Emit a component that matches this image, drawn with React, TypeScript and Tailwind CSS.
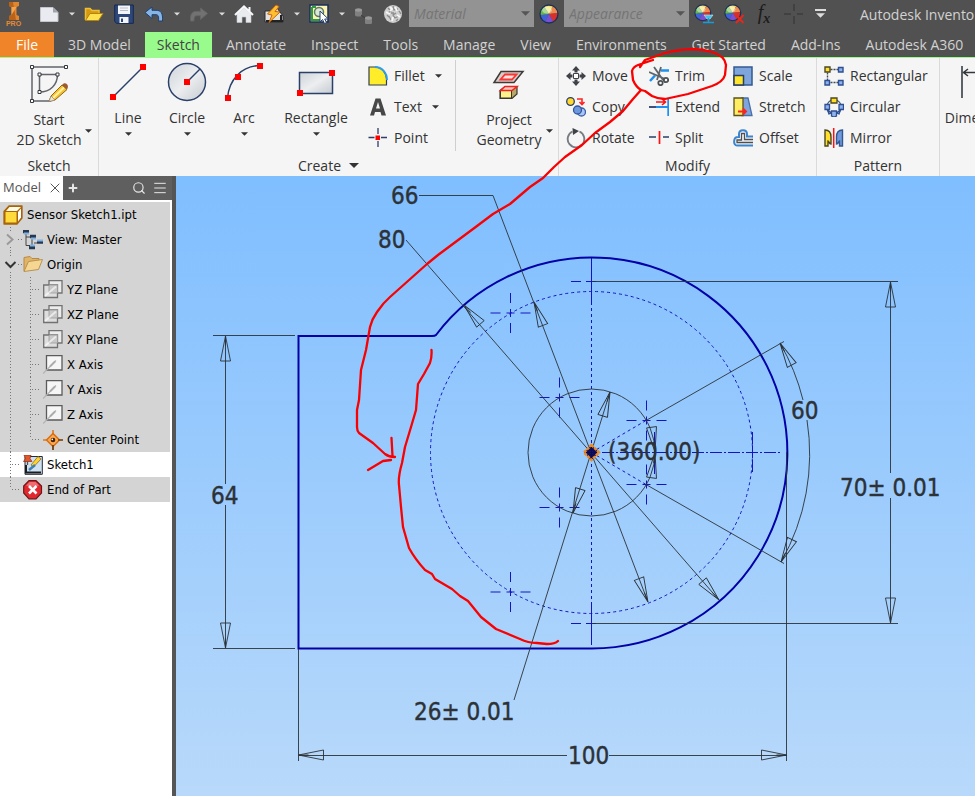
import React from 'react';
import { Menu, Plus, Search, X } from 'lucide-react';

type IconProps = { className?: string; children: React.ReactNode };

const Icon = ({ className = 'size-5', children }: IconProps) => (
  <svg viewBox="0 0 20 20" className={`${className} shrink-0`} fill="none" aria-hidden="true">
    {children}
  </svg>
);

const Caret = ({ className = 'w-[7px] h-1 text-[#333]' }: { className?: string }) => (
  <svg viewBox="0 0 8 4" className={`${className} shrink-0`} aria-hidden="true">
    <path d="M0 0H8L4 4Z" fill="currentColor" />
  </svg>
);

/* ---------- quick access bar ---------- */

const WHEEL = [
  ['#f3e06a', 'M10 10 5 2.500A9 9 0 0 1 14 2Z'],
  ['#ef8a4d', 'M10 10 14 2A9 9 0 0 1 19 9Z'],
  ['#d9302c', 'M10 10 19 9A9 9 0 0 1 14.500 18Z'],
  ['#7a4fd0', 'M10 10 14.500 18A9 9 0 0 1 6 18Z'],
  ['#3f62d8', 'M10 10 6 18A9 9 0 0 1 1 11Z'],
  ['#63b84b', 'M10 10 1 11A9 9 0 0 1 5 2.500Z'],
];

const Wheel = () => (
  <>
    {WHEEL.map(([fill, d]) => (
      <path key={fill} d={d} fill={fill} />
    ))}
    <ellipse cx="8" cy="6" rx="5" ry="3.500" fill="#fff" opacity=".45" />
    <circle cx="10" cy="10" r="9" stroke="#1d2f57" strokeWidth="1.300" />
  </>
);

const NewIcon = () => (
  <Icon>
    <path d="M1.500 3.500H14L19 8.500V17.500H1.500Z" fill="#e9ebf0" stroke="#c3c6cf" />
    <path d="M14 3.500V8.500H19Z" fill="#9ea3b0" />
  </Icon>
);

const OpenIcon = () => (
  <Icon>
    <path d="M1.500 16V4.500H6L8 6.500H15V9" fill="#d69a12" stroke="#f0be35" strokeWidth="1.500" />
    <path d="M1.500 16.500 6 9.500H19L14.500 16.500Z" fill="#ffe14f" stroke="#b5830e" />
  </Icon>
);

const SaveIcon = () => (
  <Icon>
    <path d="M.7 1H19.300V19.300H2.500L.7 17.500Z" fill="#2d4778" stroke="#16294f" />
    <path d="M4 1.500H16V10H4Z" fill="#f3f5f8" />
    <path d="M6 4H14M6 6.500H14" stroke="#b9c0cc" />
    <path d="M5.500 13H14.500V19H5.500Z" fill="#f3f5f8" />
    <path d="M7 14.500H9V18H7Z" fill="#2d4778" />
  </Icon>
);

const UndoIcon = () => (
  <Icon>
    <path d="M1 8.500 8 3V6.300H12C17 6.300 19 9 18.500 17H14.500C15 12 14 10.700 12 10.700H8V14.500Z" fill="#86b4e6" stroke="#1e416f" />
  </Icon>
);

const RedoIcon = () => (
  <Icon>
    <path d="M18.500 9.500 11.500 4V7.300H8C3 7.300 1 10 1.500 17H5C5 12.500 6 11.700 8 11.700H11.500V15.500Z" fill="#727272" stroke="#656565" />
  </Icon>
);

const HomeIcon = () => (
  <Icon>
    <path d="M3 10 10 3.500 17 10V18.500H12V13H8V18.500H3Z" fill="#e9ebee" stroke="#c4c7cc" strokeWidth=".6" />
    <path d="M1 11 10 2.500 19 11M15.500 3V7" stroke="#f7f8fa" strokeWidth="2" />
  </Icon>
);

const UpdateIcon = () => (
  <Icon>
    <path d="M1 7H9L13 4L19 12V18H1Z" fill="#e3e3e3" stroke="#2c2c2c" />
    <path d="M2 17H19M17 11V17" stroke="#222" strokeWidth="2" />
    <path d="M12 1 3.500 10 8 11 5 18.500 16 8 11 7.500 15 2.500Z" fill="#ffbf2e" stroke="#c8620d" />
  </Icon>
);

const PickIcon = () => (
  <Icon>
    <path d="M1 1H19V18H1Z" fill="#fff3b0" stroke="#1a2f5d" strokeWidth="1.500" />
    <path d="M3 3V16H11M3 3H7" stroke="#2d9c3f" strokeWidth="2" />
    <circle cx="10" cy="8" r="4.500" fill="#dbe8d4" stroke="#5c7a66" strokeWidth="1.500" />
    <path d="M11 7V18L13.500 15.500 15.500 19.500 17.500 18.500 15.700 15H19.300Z" fill="#fff" stroke="#23407a" />
  </Icon>
);

const PhysicalIcon = () => (
  <Icon>
    <path d="M1 6V11C1 13 8 13 8 11V6Z" fill="#808080" />
    <ellipse cx="4.500" cy="6" rx="3.500" ry="1.700" fill="#999" />
    <path d="M11 14V19C11 21 18 21 18 19V14Z" fill="#808080" />
    <ellipse cx="14.500" cy="14" rx="3.500" ry="1.700" fill="#999" />
    <path d="M7 11 11 14" stroke="#3c3c3c" />
  </Icon>
);

const SphereIcon = () => (
  <Icon>
    <circle cx="9" cy="10" r="9" fill="#cfcfcf" />
    <path d="M4 4 7 7 4 9M9 2 10 6 14 5M12 9 9 11 11 14 15 12M5 12 7 16M3 11 5 13M12 17 14 15M15 7 17 10M7 9H10" stroke="#8b8b8b" strokeWidth="1.300" />
    <path d="M6 3 8 5 6 7M11 3 13 7M2 8 6 10M9 13 8 17M13 11 16 13" stroke="#f7f7f7" strokeWidth="1.800" />
  </Icon>
);

const WheelIcon = () => (
  <Icon>
    <Wheel />
  </Icon>
);

const AdjustIcon = () => (
  <Icon>
    <g transform="scale(.88)">
      <Wheel />
    </g>
    <path d="M10 11H19L16 15H13Z" fill="#39c5f0" stroke="#e5f8ff" strokeWidth=".5" />
    <path d="M14.500 14V18M9 18.500H20" stroke="#189bd8" strokeWidth="1.500" />
  </Icon>
);

const ClearIcon = () => (
  <Icon>
    <g transform="scale(.88)">
      <Wheel />
    </g>
    <path d="M12 11 19.500 19M19.500 11 12 19" stroke="#e5281c" strokeWidth="2" />
  </Icon>
);

const PlusIcon = () => (
  <Icon>
    <path d="M10 0V7M10 12V20M0 10H7M13 10H19" stroke="#3c3c3c" strokeWidth="1.500" />
  </Icon>
);

const ToolButton = ({ name, children }: { name: string; children: React.ReactNode }) => (
  <button type="button" aria-label={name} className="flex w-5 h-5 shrink-0 items-center justify-center">
    {children}
  </button>
);

const MenuCaret = ({ name }: { name: string }) => (
  <button type="button" aria-label={`${name} options`} className="-mx-1 flex h-5 w-[13px] shrink-0 items-center justify-center">
    <Caret className="w-[6px] h-1 text-[#dcdcdc]" />
  </button>
);

const StyleSelect = ({ name }: { name: string }) => (
  <label className="-mx-[5px] flex h-[27px] w-[125px] shrink-0 items-center self-start bg-[#939393] pr-1">
    <select aria-label={name} className="min-w-0 flex-1 appearance-none bg-transparent pl-[5px] text-sm italic text-[#757575] outline-none">
      <option>{name}</option>
    </select>
    <Caret className="w-[9px] h-[5px] text-[#555]" />
  </label>
);

const QuickAccess = () => (
  <div className="flex h-8 items-start gap-[10px] overflow-hidden whitespace-nowrap">
    <div className="flex w-[29px] shrink-0 flex-col items-center self-start pt-[2px] pr-[2px]">
      <svg viewBox="0 0 12 18" className="h-[18px] w-3" aria-hidden="true">
        <path d="M1 0H11V4L8.500 5V13L11 14V18H1V14L3.500 13V5L1 4Z" fill="#e0862f" />
        <path d="M1 0H5L8 18H1V14L3.500 13V5L1 4Z" fill="#b9621a" />
        <path d="M3.500 5H8.500L3.500 13Z" fill="#f3a552" />
      </svg>
      <span className="font-['Liberation_Sans'] text-[7px] leading-[8px] font-bold text-[#e58a33]">PRO</span>
    </div>
    <div className="flex h-[27px] shrink-0 items-center gap-[10px]">
      <ToolButton name="New"><NewIcon /></ToolButton>
      <MenuCaret name="New" />
      <ToolButton name="Open"><OpenIcon /></ToolButton>
      <ToolButton name="Save"><SaveIcon /></ToolButton>
      <ToolButton name="Undo"><UndoIcon /></ToolButton>
      <MenuCaret name="Undo" />
      <ToolButton name="Redo"><RedoIcon /></ToolButton>
      <MenuCaret name="Redo" />
      <ToolButton name="Home"><HomeIcon /></ToolButton>
      <ToolButton name="Update"><UpdateIcon /></ToolButton>
      <MenuCaret name="Update" />
      <ToolButton name="Select"><PickIcon /></ToolButton>
      <MenuCaret name="Select" />
      <ToolButton name="Physical"><PhysicalIcon /></ToolButton>
      <ToolButton name="Material browser"><SphereIcon /></ToolButton>
      <StyleSelect name="Material" />
      <ToolButton name="Appearance browser"><WheelIcon /></ToolButton>
      <StyleSelect name="Appearance" />
      <ToolButton name="Adjust"><AdjustIcon /></ToolButton>
      <ToolButton name="Clear"><ClearIcon /></ToolButton>
      <ToolButton name="Parameters">
        <span className="font-['Liberation_Serif'] text-xl leading-5 italic text-[#1c1c1c]">
          f<sub className="text-sm font-bold">x</sub>
        </span>
      </ToolButton>
      <ToolButton name="Measure"><PlusIcon /></ToolButton>
      <button type="button" aria-label="Customize" className="flex h-5 w-3 flex-col items-center justify-center gap-[2px]">
        <span className="h-[2px] w-[11px] bg-[#dcdcdc]" />
        <Caret className="w-[9px] h-[5px] text-[#dcdcdc]" />
      </button>
    </div>
    <h1 className="ml-6 pt-[5px] text-sm leading-5 text-[#d2d2d2]">Autodesk Inventor</h1>
  </div>
);

/* ---------- tabs ---------- */

const TABS = ['3D Model', 'Sketch', 'Annotate', 'Inspect', 'Tools', 'Manage', 'View', 'Environments', 'Get Started', 'Add-Ins', 'Autodesk A360'];

const Tabs = () => (
  <nav className="flex h-[26px] gap-px overflow-hidden border-b border-[#98fb8c] text-sm whitespace-nowrap">
    <button type="button" className="mr-px w-[54px] shrink-0 bg-[#ef8429] text-white">File</button>
    {TABS.map(tab => (
      <button
        key={tab}
        type="button"
        className={tab === 'Sketch' ? 'mx-px shrink-0 bg-[#98fb8c] px-3 text-[#444]' : 'shrink-0 px-3 text-[#d2d2d2]'}
      >
        {tab}
      </button>
    ))}
  </nav>
);

/* ---------- ribbon ---------- */

const RED = '#f00';
const NAVY = '#2a4069';

const Dot = ({ x, y }: { x: number; y: number }) => <path d={`M${x - 3} ${y - 3}h6v6h-6z`} fill={RED} />;

const StartIcon = () => (
  <svg viewBox="0 0 40 40" className="size-10" fill="none" aria-hidden="true">
    <path d="M37 3H3V37H22M10.500 10.500H28.500M10.500 10.500V28C21 28 28.500 21 28.500 10.500" stroke="#60656b" strokeWidth="1.500" />
    <path d="M1.500 1.500h3v3h-3zM35.500 1.500h3v3h-3zM1.500 35.500h3v3h-3zM9 9h3v3H9zM27 9h3v3h-3zM9 26.500h3v3H9z" fill="#fff" stroke="#34383d" />
    <path d="M20 37.500 22 32 33 21 38 25.500 26 36Z" fill="#fbc02d" stroke="#8a6a18" />
    <path d="M24 34 35 23.500" stroke="#fff3a0" strokeWidth="2" />
    <path d="M33 21C36 17 41 21 38 25.500Z" fill="#9c5b2e" />
    <path d="M20 37.500 22 32 26 36Z" fill="#f3e4c8" stroke="#8b8b8b" strokeWidth=".7" />
  </svg>
);

const LineIcon = () => (
  <svg viewBox="0 0 40 40" className="size-10" aria-hidden="true">
    <path d="M5 35 35 5" stroke={NAVY} strokeWidth="1.500" />
    <Dot x={5} y={35} />
    <Dot x={35} y={5} />
  </svg>
);

const CircleIcon = () => (
  <svg viewBox="0 0 40 40" className="size-10" aria-hidden="true">
    <defs>
      <linearGradient id="metal" x2="1" y2="1">
        <stop stopColor="#cfd3d8" />
        <stop offset=".5" stopColor="#eceef0" />
        <stop offset="1" stopColor="#c6cacf" />
      </linearGradient>
    </defs>
    <circle cx="20" cy="20" r="18.500" fill="url(#metal)" stroke={NAVY} strokeWidth="1.500" />
    <path d="M20 20 33 7" stroke={NAVY} strokeWidth="1.500" />
    <Dot x={20} y={20} />
  </svg>
);

const ArcIcon = () => (
  <svg viewBox="0 0 40 40" className="size-10" fill="none" aria-hidden="true">
    <path d="M3.500 36C5 18 17 4 36 3.500" stroke={NAVY} strokeWidth="1.500" />
    <Dot x={4} y={36} />
    <Dot x={14} y={15} />
    <Dot x={36} y={4} />
  </svg>
);

const RectIcon = () => (
  <svg viewBox="0 0 40 40" className="size-10" aria-hidden="true">
    <path d="M3.500 10.500H36.500V31.500H3.500Z" fill="url(#metal)" stroke={NAVY} strokeWidth="1.500" />
    <Dot x={4} y={31} />
    <Dot x={36} y={11} />
  </svg>
);

const ProjectIcon = () => (
  <svg viewBox="0 0 40 40" className="size-10" aria-hidden="true">
    <path d="M12 7.500H34L25 18.500H5Z" fill="#d5cfca" stroke="#3f3a36" strokeWidth="1.500" />
    <path d="M16 10.500H27.500L23 15.500H11.500Z" fill="#f3e4df" stroke="#f33" strokeWidth="1.800" />
    <path d="M11 26.500 16 22.500H28V30L23 34.500H11Z" fill="#b5a86a" stroke="#3c362c" strokeWidth="1.200" />
    <path d="M11.500 26.500H22.500V34H11.500Z" fill="#fff08a" stroke="#3c362c" />
    <path d="M11.500 26.500 16 22.500H28L23 26.500Z" fill="#ffc7bd" stroke="#e22" strokeWidth="1.500" />
  </svg>
);

const FilletIcon = () => (
  <Icon>
    <path d="M1 1H7C14 1 18.500 7 18.500 13V19H1Z" fill="#ffed2a" stroke="#2f3c57" strokeWidth="1.200" />
    <path d="M7 1C14 1 19 7 19 14" stroke="#2f9cf0" strokeWidth="2" />
  </Icon>
);

const TextIcon = () => (
  <Icon>
    <path d="M2 18.500 7.500 1.500H12.500L18 18.500H13.500L12.500 15H7L6 18.500ZM8 11.500H12L10 5Z" fill="#474747" fillRule="evenodd" />
  </Icon>
);

const PointIcon = () => (
  <Icon>
    <path d="M10 0V6M10 13V19M.5 9.500H6.500M13 9.500H19" stroke={NAVY} strokeWidth="1.300" />
    <path d="M7.500 7.500H12V12H7.500Z" fill={RED} />
  </Icon>
);

const MoveIcon = () => (
  <Icon>
    <path d="M10 0 14 4.500H6ZM10 20 6 15.500H14ZM0 10 4.500 6V14ZM20 10 15.500 14V6Z" fill="#3f4348" />
    <path d="M10 3V6.500M10 13.500V17M3 10H6.500M13.500 10H17" stroke="#3f4348" strokeWidth="3" />
    <path d="M7.500 7.500H12.500V12.500H7.500Z" fill="#fff" stroke="#3f4348" />
  </Icon>
);

const CopyIcon = () => (
  <Icon>
    <circle cx="4.500" cy="4.500" r="3.800" fill="#ffd92b" stroke="#2c3e66" strokeWidth="1.300" />
    <path d="M11 2H16V6M13.500 5 16 7.500 18.500 5" stroke="#f22" strokeWidth="1.600" />
    <circle cx="15.500" cy="15" r="4" fill="#a9c6f4" stroke="#3c5fa5" strokeWidth="1.300" />
    <circle cx="11.500" cy="13" r="4" fill="#6e98dd" stroke="#31569e" strokeWidth="1.300" />
  </Icon>
);

const RotateIcon = () => (
  <Icon>
    <path d="M6.500 3.500A8.300 8.300 0 1 0 13.500 3.500" stroke="#777c82" strokeWidth="1.900" />
    <path d="M6.500 0 13 3 7 7Z" fill="#3d4247" />
  </Icon>
);

const TrimIcon = () => (
  <Icon>
    <path d="M1 15 6 9.500M12 4.500H20" stroke="#1e90ee" strokeWidth="2.500" />
    <path d="M5 1 14 14M0 6 16 13M12 1 8 14" stroke="#5e656b" strokeWidth="1.800" />
    <circle cx="17" cy="14" r="2.200" stroke="#4b5055" strokeWidth="1.800" />
    <circle cx="11.500" cy="17" r="2.200" stroke="#4b5055" strokeWidth="1.800" />
  </Icon>
);

const ExtendIcon = () => (
  <Icon>
    <path d="M0 10H7" stroke={NAVY} strokeWidth="1.800" />
    <path d="M7 10H19M19.200 1V19" stroke="#1e90ee" strokeWidth="1.800" />
    <path d="M7 5H16M13 2 16.500 5 13 8" stroke="#f11" strokeWidth="1.600" />
  </Icon>
);

const SplitIcon = () => (
  <Icon>
    <path d="M0 9H7M14 9H20" stroke={NAVY} strokeWidth="1.700" />
    <path d="M10.500 3V16" stroke="#f11" strokeWidth="1.700" />
  </Icon>
);

const ScaleIcon = () => (
  <Icon>
    <path d="M1 1H19V19H1Z" fill="#7ea6dd" stroke="#345990" strokeWidth="1.500" />
    <path d="M1 9.500H10.500V19H1Z" fill="#ffe52c" stroke="#2c3d60" strokeWidth="1.500" />
  </Icon>
);

const StretchIcon = () => (
  <Icon>
    <path d="M9 1H15L19 18.500H9Z" fill="#7ea6dd" stroke="#4b6fa8" strokeWidth="1.300" />
    <path d="M1 1H10V18.500H1Z" fill="#ffed62" stroke="#59511e" strokeWidth="1.300" />
    <path d="M5 14.500H12M10 11.500 13 14.500 10 17.500" stroke="#f22" strokeWidth="1.900" />
  </Icon>
);

const OffsetIcon = () => (
  <Icon>
    <path d="M20 8.500H14V6C14 1 6 1 6 6V9H5C0 9 0 17.500 4 17.500H20" stroke="#3d84cf" strokeWidth="2" />
    <path d="M20 11.500H11.500V5.500H8.500V12H4V14.500H20" stroke="#4b5057" strokeWidth="1.300" />
  </Icon>
);

const RectangularIcon = () => (
  <Icon>
    <path d="M3.500 3.500V17M3.500 3.500H17M3.500 16.500H17" stroke="#44495a" strokeWidth="1.400" strokeDasharray="2 1" />
    <path d="M14.500 1.500h4.500v4.500h-4.500zM1 14.500h4.500v4.500h-4.500zM14.500 14.500h4.500v4.500h-4.500z" fill="#8db2ec" stroke="#2e4f92" strokeWidth="1.400" />
    <path d="M1 1h5v5H1z" fill="#ffdf26" stroke="#4c4722" strokeWidth="1.400" />
  </Icon>
);

const CircularIcon = () => (
  <Icon>
    <circle cx="10" cy="10" r="7.300" stroke="#4a5d80" strokeWidth="1.300" />
    <path d="M1 7.500h4.500v5H1zM15 7.500h4.500v5H15zM3.500 13 7 15.500 5 17ZM13 15.500 16.500 13 15 17ZM7.500 14h5v5l-2.500 1-2.500-1z" fill="#8db2ec" stroke="#2e4f92" strokeWidth="1.300" />
    <path d="M7 1h6v5H7z" fill="#ffdf26" stroke="#4c4722" strokeWidth="1.300" />
  </Icon>
);

const MirrorIcon = () => (
  <Icon>
    <path d="M1 2C4 2 7 4 7 9V16C5 16 5 13 4 13V18H1Z" fill="#ffe02c" stroke="#4a4620" strokeWidth="1.400" />
    <path d="M18.500 2C15.500 2 12.500 4 12.500 9V16C14.500 16 14.500 13 15.500 13V18H18.500Z" fill="#6f9ade" stroke="#35578f" strokeWidth="1.400" />
    <path d="M9.700 0V20" stroke="#f11" strokeWidth="1.500" />
  </Icon>
);

type BigButtonProps = { label: string; icon: React.ReactNode; className: string };

const BigButton = ({ label, icon, className }: BigButtonProps) => (
  <button type="button" className={`flex shrink-0 flex-col items-center pt-1 ${className}`}>
    {icon}
    <span className="mt-[6px] leading-5">{label}</span>
    <Caret className="mt-1 w-[7px] h-1 text-[#333]" />
  </button>
);

// Two-line label, with the caret hanging off the right side.
const TallButton = ({ lines, icon, className = '' }: { lines: [string, string]; icon: React.ReactNode; className?: string }) => (
  <button type="button" className={`grid grid-cols-[1fr_auto_1fr] content-start items-center gap-x-1 pt-[6px] ${className}`}>
    <span className="col-start-2 justify-self-center">{icon}</span>
    <span className="col-start-2 mt-[6px] leading-5">{lines[0]}<br />{lines[1]}</span>
    <Caret className="mt-2 w-[7px] h-1 text-[#333]" />
  </button>
);

type SmallButtonProps = { label: string; icon: React.ReactNode; caret?: boolean };

const SmallButton = ({ label, icon, caret }: SmallButtonProps) => (
  <button type="button" className="flex h-[31px] items-center gap-[6px] pr-[9px]">
    {icon}
    <span>{label}</span>
    {caret && <Caret className="ml-1 w-[7px] h-1 text-[#333]" />}
  </button>
);

type PanelProps = { title: string; className: string; menu?: boolean; children: React.ReactNode };

const Panel = ({ title, className, menu, children }: PanelProps) => (
  <section className={`flex shrink-0 flex-col border-r border-[#dadada] ${className}`}>
    <div className="flex h-[97px]">{children}</div>
    <h2 className="flex h-[21px] items-center justify-center gap-2">
      {title}
      {menu && <Caret className="w-[10px] h-[5px] text-[#333]" />}
    </h2>
  </section>
);

const Ribbon = () => (
  <div className="flex h-[118px] overflow-hidden bg-[#f5f5f5] text-sm whitespace-nowrap text-[#333]">
    <Panel title="Sketch" className="w-[99px]">
      <TallButton lines={['Start', '2D Sketch']} icon={<StartIcon />} className="w-full" />
    </Panel>
    <Panel title="Create" className="w-[460px]" menu>
      <BigButton label="Line" icon={<LineIcon />} className="w-[58px]" />
      <BigButton label="Circle" icon={<CircleIcon />} className="w-[60px]" />
      <BigButton label="Arc" icon={<ArcIcon />} className="w-[54px]" />
      <BigButton label="Rectangle" icon={<RectIcon />} className="w-[90px]" />
      <div className="ml-[7px] flex w-[87px] flex-col items-start pt-[2px]">
        <SmallButton label="Fillet" icon={<FilletIcon />} caret />
        <SmallButton label="Text" icon={<TextIcon />} caret />
        <SmallButton label="Point" icon={<PointIcon />} />
      </div>
      <div className="mt-[2px] h-[91px] w-px bg-[#cfcfcf]" />
      <TallButton lines={['Project', 'Geometry']} icon={<ProjectIcon />} className="min-w-0 flex-1 pl-1" />
    </Panel>
    <Panel title="Modify" className="w-[258px]">
      <div className="grid grid-flow-col grid-cols-[83px_84px_auto] grid-rows-[31px_31px_31px] pt-[2px] pl-[7px]">
        <SmallButton label="Move" icon={<MoveIcon />} />
        <SmallButton label="Copy" icon={<CopyIcon />} />
        <SmallButton label="Rotate" icon={<RotateIcon />} />
        <SmallButton label="Trim" icon={<TrimIcon />} />
        <SmallButton label="Extend" icon={<ExtendIcon />} />
        <SmallButton label="Split" icon={<SplitIcon />} />
        <SmallButton label="Scale" icon={<ScaleIcon />} />
        <SmallButton label="Stretch" icon={<StretchIcon />} />
        <SmallButton label="Offset" icon={<OffsetIcon />} />
      </div>
    </Panel>
    <Panel title="Pattern" className="w-[123px]">
      <div className="flex flex-col items-start pt-[2px] pl-[7px]">
        <SmallButton label="Rectangular" icon={<RectangularIcon />} />
        <SmallButton label="Circular" icon={<CircularIcon />} />
        <SmallButton label="Mirror" icon={<MirrorIcon />} />
      </div>
    </Panel>
    <button type="button" className="flex w-20 shrink-0 flex-col items-center pt-1">
      <svg viewBox="0 0 40 40" className="size-10" fill="none" aria-hidden="true">
        <path d="M2 4V36M38 4V36" stroke="#5d6268" strokeWidth="2" />
        <path d="M3 10.500H37M8 7 3.500 10.500 8 14" stroke="#33383d" strokeWidth="1.500" />
      </svg>
      <span className="mt-[6px] leading-5">Dimension</span>
    </button>
  </div>
);

/* ---------- model browser ---------- */

const PartIcon = () => (
  <Icon>
    <path d="M1 6.500 6 1H19V13L14 19H1Z" fill="#a86408" stroke="#a86408" strokeWidth="1.300" strokeLinejoin="round" />
    <path d="M2.500 7H13.500V17.500H2.500Z" fill="#ffdb3c" />
    <path d="M3 6 6.500 2H18L14 6Z" fill="#fffbe6" />
    <path d="M15 7 18 3.500V12.500L15 16.500Z" fill="#fff" />
  </Icon>
);

const ViewIcon = () => (
  <Icon>
    <path d="M3 4V15.500H7M3 7H8M9 6V17" stroke="#444" />
    <path d="M0 1.500H6M7 6.500H13M14 12H20M6 17.500H12" stroke="#26384f" strokeWidth="3.500" />
    <path d="M1 3.500H6M8 8.500H13M14 10.500H20M7 15.500H12" stroke="#7fb2e6" strokeWidth="2" />
    <path d="M11 13H14" stroke="#444" />
  </Icon>
);

const FolderIcon = () => (
  <Icon>
    <path d="M1 16V2.500L7 1.500 9 3.500H16V7" fill="#e0b568" stroke="#b58a45" />
    <path d="M1 16.500 5.500 6.500 19.500 4.500 15.500 14.500Z" fill="#f5d793" stroke="#b9924f" />
  </Icon>
);

const PlaneIcon = () => (
  <Icon>
    <path d="M6 .7H19V13H6Z" fill="#ececec" stroke="#717171" strokeWidth="1.300" />
    <path d="M.7 5H14.500V17.500H.7Z" fill="#dedede" stroke="#717171" strokeWidth="1.300" />
    <path d="M6 5H14.500V13H6Z" fill="#c8c8c8" stroke="#9a9a9a" strokeWidth=".8" />
    <path d="M2 16 13 6.500" stroke="#fff" strokeWidth="2" opacity=".6" />
  </Icon>
);

const AxisIcon = () => (
  <Icon>
    <path d="M3.500 .7H19V15H3.500Z" fill="#f6f6f6" stroke="#5b5b5b" strokeWidth="1.300" />
    <path d="M0 18.500 13 5.500" stroke="#b2b2b2" strokeWidth="1.200" />
    <path d="M7 11.500 12 6.500" stroke="#ababab" strokeWidth="1.800" />
  </Icon>
);

const CenterIcon = () => (
  <Icon>
    <path d="M10 0V20M0 10H20" stroke="#e07a1f" strokeWidth="1.600" />
    <path d="M10 3.500 16.500 10 10 16.500 3.500 10Z" fill="#ffa94d" stroke="#d96d13" strokeWidth="1.500" />
    <path d="M10 15V20M15 10H20" stroke="#3b2a18" strokeWidth="1.200" />
    <circle cx="10" cy="10" r="2.300" fill="#3b1f0a" />
    <circle cx="9.300" cy="9.300" r=".9" fill="#fff" />
  </Icon>
);

const SketchIcon = () => (
  <Icon>
    <path d="M2 1.500H19.300V19.300H2Z" fill="#cfe1f0" stroke="#232a33" />
    <path d="M3 10V17.500H18" stroke="#1c1c1c" strokeWidth="2" />
    <path d="M8 10 10.500 12 18 4 15 1.500Z" fill="#ffd232" stroke="#8f6c14" strokeWidth=".8" />
    <path d="M6 15 12 10" stroke="#3f7fb3" strokeWidth="2.500" />
    <path d="M1 0H8L7 3.500 9 6.500H.5L2.500 3.500Z" fill="#e2572b" stroke="#8d2d12" strokeWidth=".7" />
    <path d="M4.500 6.500V10" stroke="#555" strokeWidth="1.300" />
  </Icon>
);

const EndIcon = () => (
  <Icon>
    <path d="M6 .7H13L18.500 6V13L13 18.800H6L.7 13V6Z" fill="#e2282f" stroke="#6d1518" strokeWidth="1.200" />
    <path d="M6.500 2H12.500L16 5.500C12 7 7 7 3 5.500Z" fill="#f58a8c" opacity=".7" />
    <path d="M6 6 13.500 13.500M13.500 6 6 13.500" stroke="#fff" strokeWidth="2.600" />
  </Icon>
);

type TreeNode = { label: string; icon: React.ReactNode; width: string; guide: string; fold?: 'open' | 'closed'; active?: boolean };

// Each guide is the dotted connector drawn to the left of the node's icon.
const LEAF = 'M10.500 0V25M30.500 0V25M32 12.500H41';

const TREE: TreeNode[] = [
  { label: 'Sensor Sketch1.ipt', icon: <PartIcon />, width: 'w-[3px]', guide: '' },
  { label: 'View: Master', icon: <ViewIcon />, width: 'w-[23px]', guide: 'M10.500 0V5M10.500 20V25M18 12.500H22', fold: 'closed' },
  { label: 'Origin', icon: <FolderIcon />, width: 'w-[23px]', guide: 'M10.500 0V5M10.500 20V25M18 12.500H22', fold: 'open' },
  { label: 'YZ Plane', icon: <PlaneIcon />, width: 'w-[43px]', guide: LEAF },
  { label: 'XZ Plane', icon: <PlaneIcon />, width: 'w-[43px]', guide: LEAF },
  { label: 'XY Plane', icon: <PlaneIcon />, width: 'w-[43px]', guide: LEAF },
  { label: 'X Axis', icon: <AxisIcon />, width: 'w-[43px]', guide: LEAF },
  { label: 'Y Axis', icon: <AxisIcon />, width: 'w-[43px]', guide: LEAF },
  { label: 'Z Axis', icon: <AxisIcon />, width: 'w-[43px]', guide: LEAF },
  { label: 'Center Point', icon: <CenterIcon />, width: 'w-[43px]', guide: 'M10.500 0V25M30.500 0V12M32 12.500H41' },
  { label: 'Sketch1', icon: <SketchIcon />, width: 'w-[23px]', guide: 'M10.500 0V25M12 12.500H21', active: true },
  { label: 'End of Part', icon: <EndIcon />, width: 'w-[23px]', guide: 'M10.500 0V12M12 12.500H21' },
];

const Browser = () => (
  <aside className="flex w-[176px] shrink-0 flex-col border-r-4 border-[#555] bg-white">
    <div className="flex h-6 items-center bg-[#5f5f5f] text-[#e6e6e6]">
      <div className="flex h-full w-[63px] items-center gap-[6px] bg-white pl-[3px] text-[#555]">
        <span className="text-[13px]">Model</span>
        <button type="button" aria-label="Close"><X className="size-4" strokeWidth={1.5} /></button>
      </div>
      <button type="button" aria-label="Add" className="ml-1"><Plus className="size-3" strokeWidth={4} /></button>
      <button type="button" aria-label="Search" className="ml-auto"><Search className="size-[14px]" strokeWidth={2} /></button>
      <button type="button" aria-label="Menu" className="mr-1 ml-[6px]"><Menu className="size-4" strokeWidth={1.5} /></button>
    </div>
    <ul className="mr-[2px] pt-[2px] font-['DejaVu_Sans_Condensed','Noto_Sans',sans-serif] text-[13px] text-black">
      {TREE.map(node => (
        <li key={node.label} className={`flex h-[25px] items-center ${node.active ? 'bg-white' : 'bg-[#d4d4d4]'}`}>
          <svg className={`h-[25px] shrink-0 ${node.width}`} fill="none" aria-hidden="true">
            <path d={node.guide} stroke="#777" strokeDasharray="1 2" />
            {node.fold === 'closed' && <path d="M7 7.500 12.500 12.500 7 17.500" stroke="#9a9a9a" strokeWidth="2" />}
            {node.fold === 'open' && <path d="M5.500 10 10.500 15 15.500 10" stroke="#333" strokeWidth="2" />}
          </svg>
          {node.icon}
          <span className="pl-1">{node.label}</span>
        </li>
      ))}
    </ul>
  </aside>
);

/* ---------- sketch canvas ---------- */

// Hollow dimension arrow: tip position and heading in degrees (0 points right).
const ARROWS = [
  [225.5, 336, -90], [225.5, 648, 90], [890.5, 282, -90], [890.5, 623, 90],
  [298.5, 755, 180], [786.5, 755, 0], [534, 302, -111], [648, 602, 69],
  [464, 305, -131], [719, 600, 49], [610, 392, -73], [573, 513, 107],
  [780, 343, -118], [781, 562, 116], [655, 452, 82], [655, 453, -82],
];

const CROSSES = [
  [510.5, 313], [510.5, 592], [559.5, 397.5], [559.5, 507.5], [646.5, 420.5], [646.5, 484.5],
];

const LABELS: [number, number, string][] = [
  [391, 204, '66'], [378, 248, '80'], [211, 504, '64'], [791, 419, '60'],
  [840, 496, '70± 0.01'], [414, 720, '26± 0.01'], [568, 764, '100'], [608, 460, '(360.00)'],
];

const Canvas = () => (
  <main className="min-w-0 flex-1 bg-linear-to-b from-[#7fbeff] to-[#b8d9fa]">
    <svg className="block h-[620px] w-full" fill="none" role="img" aria-label="Sensor sketch">
      <g transform="translate(-176 -176)">
        <g stroke="#1414c0">
          <circle cx="591.500" cy="452.500" r="161" strokeDasharray="3 3" />
          <path d="M591.500 302V603M591.500 452.500 646 420.500M591.500 452.500 646 484.500" strokeDasharray="3 3" />
          <path d="M591.500 258V302M591.500 603V645M571 281.500H581M571 623.500H581M586 281.500H596M586 623.500H596" />
          <path d="M602 452.500H782" strokeDasharray="12 2 2 2" />
          <path d="M752.500 432V474" strokeDasharray="12 2" />
          <path d="M654.500 432V474" />
          {CROSSES.map(([x, y]) => (
            <path key={`${x} ${y}`} d={`M${x - 20} ${y}h10m6 0h8m6 0h10M${x} ${y - 20}v10m0 6v8m0 6v10`} />
          ))}
        </g>
        <path d="M298.500 648.500V336H432Q435 336 436 335A195.500 195.500 0 1 1 591.500 648.500Z" stroke="#0000a8" strokeWidth="2" />
        <g stroke="#2b3238" strokeWidth=".9">
          <circle cx="591.500" cy="452.500" r="63.500" />
          <path d="M213 335.500H295M213 648.500H295M225.500 336V484M225.500 505V648" />
          <path d="M592 281.500H898M592 623.500H898M890.500 282V473M890.500 498V623" />
          <path d="M298.500 649V761M786.500 452V761M299 755.500H567M609 755.500H787" />
          <path d="M419 195.500H493L648 602M406 240 719 600M610 392 514 700" />
          <path d="M646 420.500 784 341.500M646 484.500 784 563.500" />
          <path d="M780 343A218 218 0 0 1 803 400M807 420A218 218 0 0 1 781 562" />
          {ARROWS.map(([x, y, turn]) => (
            <path key={`${x} ${y}`} d="M0 0 -25 -5V5ZM0 0H-10" transform={`translate(${x} ${y}) rotate(${turn})`} />
          ))}
        </g>
        <path d="M591.500 445 599 452.500 591.500 460 584 452.500Z" fill="#101070" stroke="#f08a1c" strokeWidth="2.500" strokeDasharray="3 1" />
        <path d="M589 450h5v5h-5zM591.500 447V458M586 452.500H597" stroke="#0b0b50" />
        <g fill="#2c3237" stroke="#2c3237" strokeWidth=".4" fontFamily="DejaVu Sans Condensed, Noto Sans, sans-serif" fontSize="24">
          {LABELS.map(([x, y, text]) => (
            <text key={text} x={x} y={y}>{text}</text>
          ))}
        </g>
      </g>
    </svg>
  </main>
);

// Hand-drawn markup on top of the whole window.
const Markup = () => (
  <svg className="pointer-events-none absolute inset-0 h-full w-full" fill="none" stroke="#fa0000" strokeWidth="2.300" strokeLinecap="round" strokeLinejoin="round" aria-hidden="true">
    <path d="M653 60 638 65Q633 67 632 71L633 80Q636 87 641 90L645 91 652 96Q658 99 665 99L688 94 712 86Q723 82 725 75L726 65Q725 56 712 52 702 49 692 49 676 50 665 53L645 60 640 67" />
    <path d="M641 90 633 99 623 111 610 122 595 133 582 145 565 157 554 167 543 178 530 187 510 204 493 214 473 229 438 255 427 264 390 297Q383 303 377 312 372 319 370 327L366 350 361 370 359 400 357 410V427Q357 431 359 433L373 443 385 454Q389 457 395 457" />
    <path d="M391.500 438 392.500 456M368 470 383 461 391 460" />
    <path d="M431.500 350Q432 357 430 363L424 374 418 384 416 410 411 427 405 447 402 463Q398 477 399 485L401 507 403 527 409 548Q415 559 425 570L432 574 435 579 452 589 460 596 468 601 481 617 496 629 520 639Q528 643 537 643L547 644Q555 644 558 641" />
  </svg>
);

export default function App() {
  return (
    <div className="relative flex min-h-screen flex-col overflow-hidden bg-[#515151] font-['Open_Sans',sans-serif]">
      <header>
        <QuickAccess />
        <Tabs />
        <Ribbon />
      </header>
      <div className="flex flex-1">
        <Browser />
        <Canvas />
      </div>
      <Markup />
    </div>
  );
}
